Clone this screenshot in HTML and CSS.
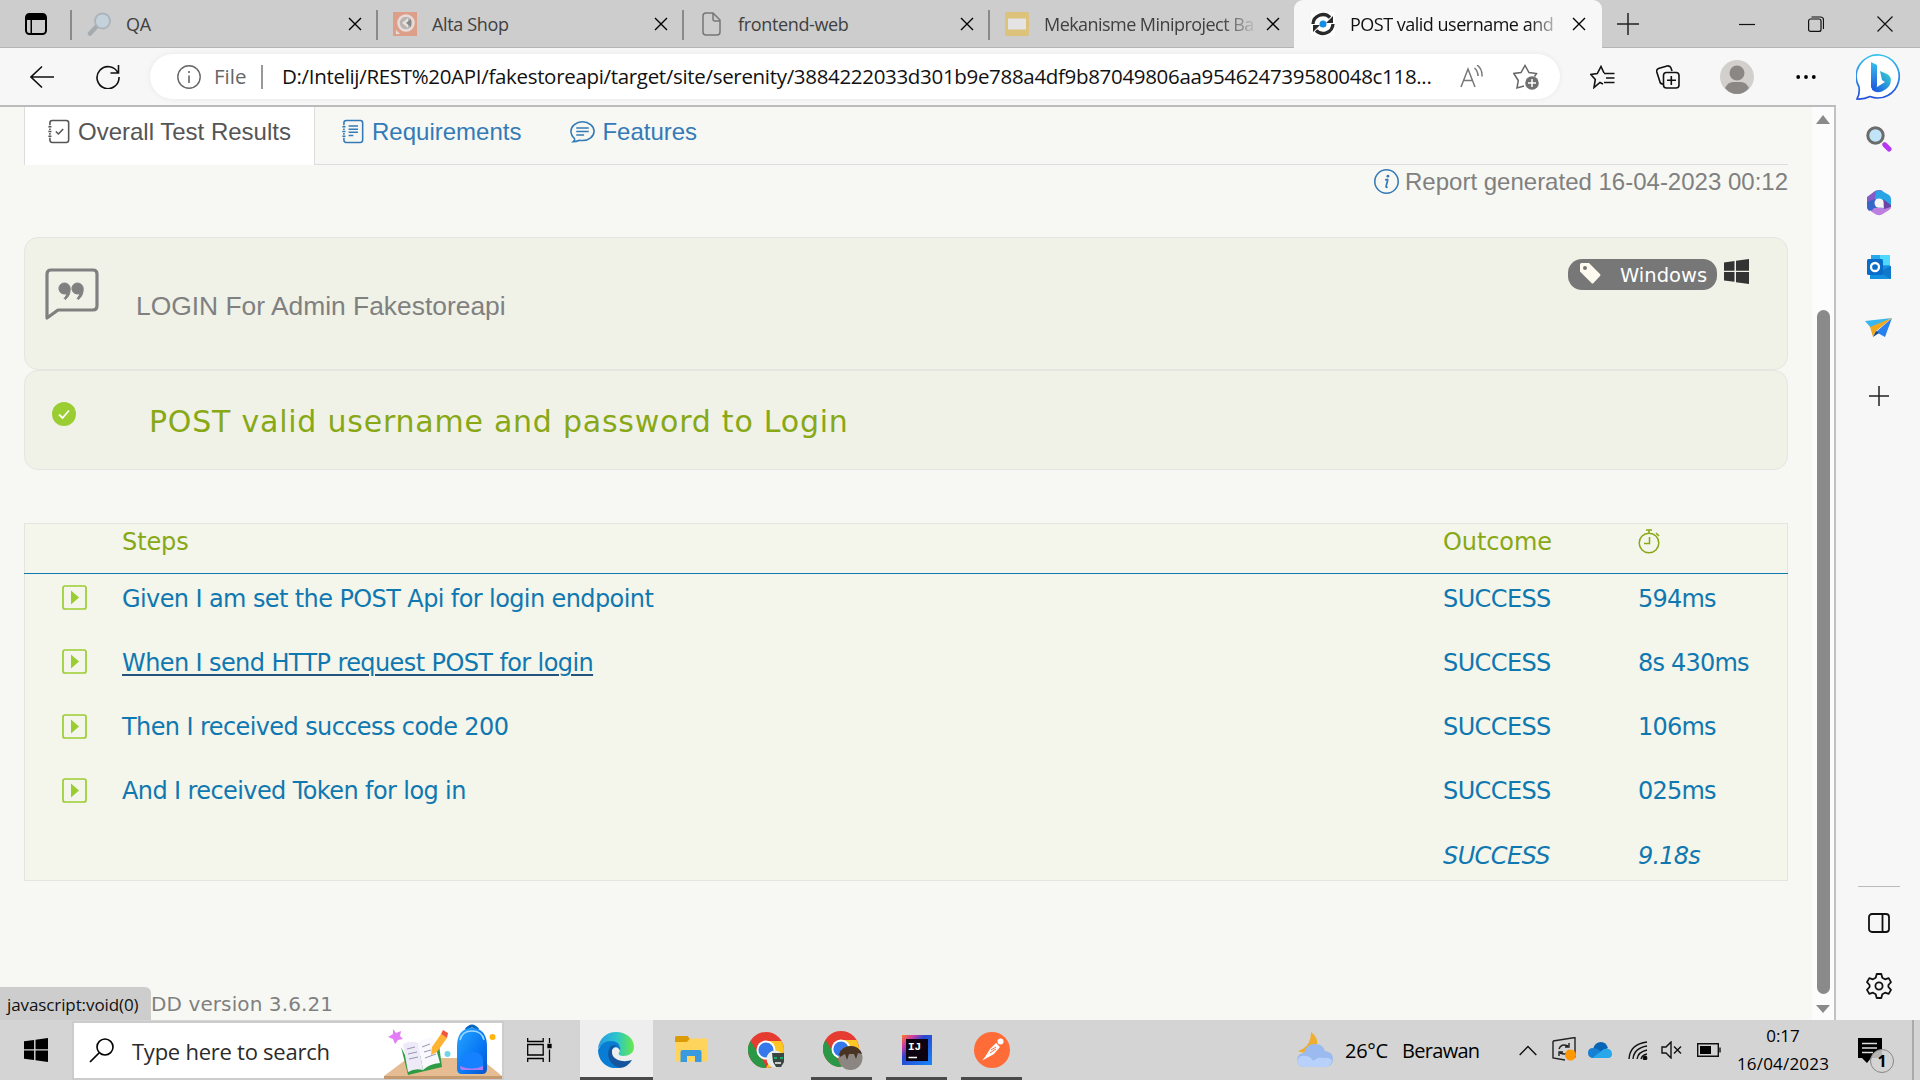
FILE: index.html
```html
<!DOCTYPE html>
<html lang="en">
<head>
<meta charset="utf-8">
<title>POST valid username and password to Login</title>
<link rel="stylesheet" href="styles.css">
</head>
<body>
<header class="tabstrip">
  <div class="tab-actions"><svg width="24" height="24" viewBox="0 0 24 24"><rect x="2" y="2" width="20" height="20" rx="3.5" fill="none" stroke="#000" stroke-width="2"/><path d="M2 8V5q0-3 3-3h14q3 0 3 3v3zM6.500 8h1.500v14h-1.500z"/></svg></div>
  <div class="tab"><svg class="fav" viewBox="0 0 24 24"><path d="M10 14L3 21.500" stroke="#a5abae" stroke-width="4.500" stroke-linecap="round"/><circle cx="15.500" cy="9" r="7.500" fill="#c4d2dc" stroke="#abb4ba" stroke-width="1.800"/></svg><span class="tab-title">QA</span><svg class="close" viewBox="0 0 14 14"><path d="M1 1l12 12M13 1L1 13"/></svg></div>
  <div class="tab"><svg class="fav" viewBox="0 0 24 24"><path fill="#dd9f8a" d="M0 0h24v24H0z"/><circle cx="13" cy="11" r="7.500" fill="#b9b4b2" stroke="#e6ddda" stroke-width="2.500"/><path d="M3 18l4 4H3zM9 11l6-5v10z" fill="#e6e0de"/><path d="M13 11l5-4v8z" fill="#888"/></svg><span class="tab-title">Alta Shop</span><svg class="close" viewBox="0 0 14 14"><path d="M1 1l12 12M13 1L1 13"/></svg></div>
  <div class="tab"><svg class="fav" viewBox="0 0 24 24"><path d="M6 1h8l7 7v12q0 3-3 3H7q-3 0-3-3V4q0-3 3-3M14 1v6q0 2 2 2h5" fill="none" stroke="#777" stroke-width="1.500"/></svg><span class="tab-title">frontend-web</span><svg class="close" viewBox="0 0 14 14"><path d="M1 1l12 12M13 1L1 13"/></svg></div>
  <div class="tab"><svg class="fav" viewBox="0 0 24 24"><rect width="24" height="24" rx="2" fill="#ddc27c"/><path d="M3 6.500h18v11H3z" fill="#e4e4e4"/></svg><span class="tab-title fade slides">Mekanisme Miniproject Ba</span><svg class="close" viewBox="0 0 14 14"><path d="M1 1l12 12M13 1L1 13"/></svg></div>
  <div class="tab active"><svg class="fav" viewBox="0 0 24 24"><path fill="#fff" d="M0 0h24v24H0z"/><g fill="none" stroke="#292929" stroke-width="3.300"><path d="M2 12A10 10 0 0 1 19 5.500M22 12A10 10 0 0 1 5 18.500"/></g><path d="M22 4v7h-7zM2 20v-7h7z" fill="#292929"/><circle cx="12" cy="12" r="3.500" fill="#168de2"/></svg><span class="tab-title fade">POST valid username and</span><svg class="close" viewBox="0 0 14 14"><path d="M1 1l12 12M13 1L1 13"/></svg></div>
  <svg class="new-tab" width="22" height="22" viewBox="0 0 22 22"><path d="M11 0v22M0 11h22"/></svg>
  <div class="win-buttons">
    <svg width="16" height="16" viewBox="0 0 16 16"><path d="M0 8.500h16"/></svg>
    <svg width="16" height="16" viewBox="0 0 16 16"><rect x=".6" y="3" width="12.400" height="12.400" rx="2"/><path d="M3.500 1h9q3 0 3 3v9"/></svg>
    <svg width="16" height="16" viewBox="0 0 16 16"><path d="M.5.5l15 15M15.500.5l-15 15"/></svg>
  </div>
</header>

<nav class="toolbar">
  <svg class="back" width="24" height="24" viewBox="0 0 24 24"><path d="M24 12H1M12 1.500L1 12l11 10.500"/></svg>
  <svg class="reload" width="24" height="24" viewBox="0 0 24 24"><path d="M22 8A11 11 0 1 0 23 12M22.500 0v8h-8"/></svg>
  <div class="address">
    <svg width="24" height="24" viewBox="0 0 24 24"><circle cx="12" cy="12" r="11.200" fill="none" stroke="#666" stroke-width="1.400"/><path d="M12 10.500v7.500" stroke="#666" stroke-width="1.600"/><circle cx="12" cy="7" r="1.100" fill="#666"/></svg>
    <span class="scheme">File</span><i class="pipe"></i>
    <span class="url">D:/Intelij/REST%20API/fakestoreapi/target/site/serenity/3884222033d301b9e788a4df9b87049806aa954624739580048c118...</span>
    <svg class="read" width="24" height="24" viewBox="0 0 24 24"><path d="M1 22L8 4l7 18M3.500 15.500h9M14.500 3q3.500 3 3.500 8M17 0q5.500 4 5 11.500" fill="none" stroke="#777" stroke-width="1.500"/></svg>
    <svg width="26" height="26" viewBox="0 0 26 26"><path d="M11 22l-7 2 1.300-7.500L.8 9.500l7.200-1L12 1.500l4 7 7.500 1-2 3" fill="none" stroke="#666" stroke-width="1.500"/><circle cx="19" cy="19" r="6.800" fill="#707070"/><path d="M19 15v8M15 19h8" stroke="#fff" stroke-width="1.500"/></svg>
  </div>
  <svg class="fav-list" width="26" height="24" viewBox="0 0 26 24"><path d="M14 8.500h10.500M16 13h8.500M14 17.500h10.500M13 19l-3-1.500-6 5 1.300-8L.8 9.500l6.500-1L11 1.500l3 6.500"/></svg>
  <svg class="collections" width="24" height="24" viewBox="0 0 24 24"><path d="M7 19Q4.500 19 4 17L.8 7Q.2 4.500 2.500 3.500L11 1q3-.7 4 2l1 3"/><rect x="7.500" y="7.500" width="15.500" height="15.500" rx="3"/><path d="M15.300 11v9M11 15.300h9"/></svg>
  <svg class="avatar" width="34" height="34" viewBox="0 0 34 34"><circle cx="17" cy="17" r="17" fill="#d2d0cd"/><circle cx="17" cy="13" r="7.500" fill="#8a8785"/><path d="M5 28q3-6 8-6h8q5 0 8 6-5 6-12 6T5 28z" fill="#8a8785"/></svg>
  <svg class="dots" width="20" height="6" viewBox="0 0 20 6"><circle cx="2.200" cy="3" r="1.900"/><circle cx="10" cy="3" r="1.900"/><circle cx="17.800" cy="3" r="1.900"/></svg>
  <svg class="bing" width="46" height="48" viewBox="0 0 46 48"><defs><linearGradient id="bg1" x1="0" y1="0" x2="0" y2="1"><stop stop-color="#35c1ee"/><stop offset="1" stop-color="#2350db"/></linearGradient><linearGradient id="bg2" x1="0" y1="1" x2="1" y2="0"><stop stop-color="#174ae4"/><stop offset="1" stop-color="#37d8d0"/></linearGradient></defs><path d="M23.500 1A21.500 21.500 0 1 1 14 42.500Q8 45.500 1 45q3-5 2-12A21.500 21.500 0 0 1 23.500 1z" fill="#fff" stroke="url(#bg1)" stroke-width="1.700"/><path d="M15 8l6 3v21l-2 5-4-4z" fill="url(#bg1)"/><path d="M24 17l7 3q5 2.500 3.500 9-1 4-6 7-5 3.500-10 1.500-3-1.500-3.500-5l6 .5 8-5-3-2z" fill="url(#bg2)"/></svg>
</nav>

<div class="middle">
  <main class="page">
    <div class="report-tabs">
      <div class="rtab current"><svg width="25" height="25" viewBox="0 0 16 16"><path d="M4 1h9q1.500 0 1.500 1.500v11Q14.500 15 13 15H4q-1.500 0-1.500-1.500V12m0-2V9m0-2V6m0-2V2.500Q2.500 1 4 1M1.500 5h2M1.500 8h2M1.500 11h2M6.300 8l1.700 1.600 3-3.200" /></svg><span>Overall Test Results</span></div>
      <div class="rtab second"><svg width="25" height="25" viewBox="0 0 16 16"><path d="M4 1h9q1.500 0 1.500 1.500v11Q14.500 15 13 15H4q-1.500 0-1.500-1.500V12m0-2V9m0-2V6m0-2V2.500Q2.500 1 4 1M1.500 5h2M1.500 8h2M1.500 11h2M5.500 4.500h6M5.500 6.500h6M5.500 8.500h6M5.500 10.500h3" /></svg><span>Requirements</span></div>
      <div class="rtab third"><svg width="25" height="25" viewBox="0 0 16 16"><path d="M3 12.500Q.6 10.500.6 7.800C.6 4.500 4 1.800 8 1.800s7.400 2.700 7.400 6-3.400 6-7.400 6q-1 0-2-.2-2 1-4 1 1.200-1 1-2.100M4 5.800h8M4 8h8M4 10.200h5"/></svg><span>Features</span></div>
    </div>
    <div class="generated"><svg width="25" height="25" viewBox="0 0 16 16"><circle cx="8" cy="8" r="7.500" fill="none" stroke="#337ab7"/><path d="M8.900 6.600L7.700 11.200q0 .8 1 .3M7.100 6.900l1.800-.3" fill="none" stroke="#337ab7" stroke-width="1.100"/><circle cx="8.900" cy="4.600" r=".9" fill="#337ab7"/></svg><span>Report generated 16-04-2023 00:12</span></div>

    <section class="card story">
      <svg width="54" height="54" viewBox="0 0 54 54"><path d="M2 50V6q0-4 4-4h42q4 0 4 4v32q0 4-4 4H13z" fill="none" stroke="#808080" stroke-width="3.200" stroke-linejoin="round"/><path d="M19.500 15a5.700 5.700 0 0 1 5.700 6q0 7-5 10.500l-1-1q2.500-3 2.500-5a5.500 5.500 0 1 1-2.200-10.500zM32.500 15a5.700 5.700 0 0 1 5.700 6q0 7-5 10.500l-1-1q2.500-3 2.500-5A5.500 5.500 0 1 1 32.500 15z" fill="#808080" stroke="#808080"/></svg>
      <h2>LOGIN For Admin Fakestoreapi</h2>
      <div class="tagline">
        <span class="badge"><svg width="21" height="21" viewBox="0 0 21 21"><path d="M0 1.500Q0 0 1.500 0H9l11 11q1 1 0 2l-6.500 7q-1 1-2 0L0 8.500z" fill="#fffaf0"/><circle cx="5" cy="5" r="2" fill="#777"/></svg><b>Windows</b></span>
        <svg width="25" height="25" viewBox="0 0 25 25"><path d="M0 3.500L10.500 2v9.700H0zM12 1.800L25 0v11.700H12zM0 13h10.500v9.800L0 21.500zM12 13h13v12l-13-1.800z" fill="#333"/></svg>
      </div>
    </section>
    <section class="card scenario">
      <svg width="24" height="24" viewBox="0 0 24 24"><circle cx="12" cy="12" r="12" fill="#9acd32"/><path d="M7 12.500l3.500 3.500L17 8.500" fill="none" stroke="#fff" stroke-width="1.800"/></svg>
      <h1>POST valid username and password to Login</h1>
    </section>

    <section class="steps">
      <div class="row head"><i></i><span>Steps</span><span>Outcome</span><svg width="22" height="25" viewBox="0 0 22 25"><circle cx="11" cy="14" r="9.800"/><path d="M8 1h6M11 1v3M18 4l3 3M11.500 8v6.500H6"/></svg></div>
      <div class="row"><svg class="play" viewBox="0 0 25 25"><rect x="1" y="1" width="23" height="23" rx="2"/><path d="M9 5.500l8 7-8 7z"/></svg><a>Given I am set the POST Api for login endpoint</a><span>SUCCESS</span><span class="time-taken">594ms</span></div>
      <div class="row"><svg class="play" viewBox="0 0 25 25"><rect x="1" y="1" width="23" height="23" rx="2"/><path d="M9 5.500l8 7-8 7z"/></svg><a class="hovered">When I send HTTP request POST for login</a><span>SUCCESS</span><span class="time-taken">8s 430ms</span></div>
      <div class="row"><svg class="play" viewBox="0 0 25 25"><rect x="1" y="1" width="23" height="23" rx="2"/><path d="M9 5.500l8 7-8 7z"/></svg><a>Then I received success code 200</a><span>SUCCESS</span><span class="time-taken">106ms</span></div>
      <div class="row"><svg class="play" viewBox="0 0 25 25"><rect x="1" y="1" width="23" height="23" rx="2"/><path d="M9 5.500l8 7-8 7z"/></svg><a>And I received Token for log in</a><span>SUCCESS</span><span class="time-taken">025ms</span></div>
      <div class="row total"><i></i><i></i><em>SUCCESS</em><em class="time-taken">9.18s</em></div>
    </section>
    <footer class="footer"><div class="status">javascript:void(0)</div><span>DD version 3.6.21</span></footer>
  </main>
  <div class="scrollbar"><i class="up"></i><i class="thumb"></i><i class="down"></i></div>
  <aside class="sidebar">
    <svg width="26" height="26" viewBox="0 0 26 26"><path d="M17 17l2 2" stroke="#777" stroke-width="3"/><path d="M19 19l4 4" stroke="#b936f5" stroke-width="5" stroke-linecap="round"/><circle cx="9.500" cy="9.500" r="7.700" fill="#c2e4f8" stroke="#6b6b6b" stroke-width="3"/></svg>
    <svg width="26" height="26" viewBox="0 0 26 26"><path d="M1 7l8-6q4-2 8 0l-7 7v10l-7 3q-2-2-2-4z" fill="#855bc7"/><path d="M10 1q3-1.500 6 0l7 4q2 1.500 2 4v8l-7-7-9-1z" fill="#29a5e6"/><path d="M1 12l8-3v8l9 1-6 5-9-3q-2-1-2-4z" fill="#3566c9"/><path d="M8 18h10l7-2q0 3-2 4l-7 4.500q-3 1.500-6 0l-5-3z" fill="#bc80e0"/><path d="M17 9l8 6v2l-7 2z" fill="#6b45a5"/><circle cx="13" cy="13" r="4.500" fill="#f6f6f6"/></svg>
    <svg width="26" height="26" viewBox="0 0 26 26"><path d="M5 1h19v12H5z" fill="#28a8ea"/><path d="M14 1h10v10H14z" fill="#50d9ff"/><path d="M4 12h21v13H4z" fill="#1490df"/><path d="M25 12v13l-12-7z" fill="#0f78c8"/><rect x="1" y="5" width="16" height="16" rx="1.500" fill="#0a6cc9"/><circle cx="9" cy="13" r="4" fill="none" stroke="#fff" stroke-width="2.300"/></svg>
    <svg width="28" height="20" viewBox="0 0 28 20"><path d="M0 3L27 0 6 10z" fill="#38b6ee"/><path d="M27 0L20 19l-9-5z" fill="#2881ed"/><path d="M5 9L27 0 11 13l-3 6z" fill="#f2a81d"/><path d="M8 19l3-6 3 2z" fill="#17478c"/></svg>
    <svg class="plus" width="20" height="20" viewBox="0 0 20 20"><path d="M10 0v20M0 10h20"/></svg>
    <hr>
    <svg class="panel" width="22" height="20" viewBox="0 0 22 20"><rect x="1" y="1" width="20" height="18" rx="3"/><path d="M14.500 1v18"/></svg>
    <svg class="gear" width="26" height="26" viewBox="0 0 26 26"><path d="M10.700 1h4.600l1 3.800 2.700 1.500 3.700-1.200 2.300 4-2.600 2.900v2l2.600 2.900-2.300 4-3.700-1.200-2.700 1.500-1 3.800h-4.600l-1-3.800L7 19.700l-3.700 1.200-2.300-4L3.600 14v-2L1 9.100l2.300-4L7 6.300l2.700-1.500z"/><circle cx="13" cy="13" r="3.600"/></svg>
  </aside>
</div>

<footer class="taskbar">
  <svg class="start" width="24" height="24" viewBox="0 0 25 25"><path d="M0 3.500L10.500 2v9.700H0zM12 1.800L25 0v11.700H12zM0 13h10.500v9.800L0 21.500zM12 13h13v12l-13-1.800z"/></svg>
  <div class="search">
    <svg width="25" height="25" viewBox="0 0 25 25"><circle cx="16" cy="9" r="8" fill="none" stroke="#000" stroke-width="1.600"/><path d="M10 15L1 24" stroke="#000" stroke-width="1.700"/></svg>
    <span>Type here to search</span>
    <svg class="art" width="118" height="56" viewBox="0 0 118 56"><defs><linearGradient id="bag" x1="0" y1="0" x2="1" y2="1"><stop stop-color="#27a7ff"/><stop offset=".6" stop-color="#0877f5"/><stop offset="1" stop-color="#0755c8"/></linearGradient></defs><path d="M24 35h72l22 18H0z" fill="#e6bd92"/><path d="M0 53h118v3H0z" fill="#c39a70"/><path d="M9 6l3 4 5-2-1 5 3 3-5 1-3 4-2-5-5-2 5-3z" fill="#e37df7"/><path d="M17 24l7 28 34-8-3-22-6 8-26 6z" fill="#2f9b45"/><path d="M19 21q9-4 15-1l5 27q-8-2-15 2z" fill="#eeeaf7"/><path d="M34 20q5-5 15-5l7 25q-11 1-17 7z" fill="#faf8ff"/><path d="M23 26l8-2M24 31l9-2M25 36l9-2M38 24l8-3M40 29l7-2M41 35l11-4" stroke="#9994b2"/><path d="M48 24L57 11l6 4-10 14-6 3z" fill="#ffb333"/><path d="M57 11l2-4 5 3-1 5z" fill="#f0573b"/><circle cx="63.500" cy="31" r="3" fill="#70d4e8"/><circle cx="108.500" cy="14" r="3" fill="#ffb50b"/><path d="M82 7q6-8 12 0" fill="none" stroke="#0867bd" stroke-width="3"/><path d="M73 24Q73 5 88 5t15 19v22q0 5-5 5H78q-5 0-5-5z" fill="url(#bag)"/><path d="M76 17q2-9 12-9t12 9" fill="none" stroke="#9fd8ff" stroke-width="1.500"/><path d="M77 45V38q0-9 11-9t11 9v7q0 2-2 2H79q-2 0-2-2z" fill="#1681ff"/><path d="M76 43q12 5 23 0v4H78q-2 0-2-4z" fill="#ab7bf2"/></svg>
  </div>
  <svg class="taskview" width="25" height="24" viewBox="0 0 25 24"><path d="M.7 0v3.500h15.500V0M.7 6.500h15.500V17H.7zM.7 24v-3.500h15.500V24M22.500 0v5M22.500 11.500V24"/><path d="M21 6.500h3v3h-3z" fill="#000"/></svg>
  <div class="app edge on"><svg width="36" height="36" viewBox="0 0 36 36"><defs><linearGradient id="e1"><stop stop-color="#279be3"/><stop offset=".5" stop-color="#2bc3cf"/><stop offset="1" stop-color="#66eb48"/></linearGradient></defs><path d="M0 17C1 6 9 0 18 0c11 0 18 7 18 15 0 6-5 9-11 9-5 0-5-3-3-5 1-6-3-9-8-9Q5 10 0 17z" fill="url(#e1)"/><path d="M0 18Q4 9 13 9c8 0 10 6 9 10-3-7-9-3-9 3 0 7 4 12 9 14C9 38 0 29 0 18z" fill="#087dd3"/><path d="M13 14c-5 6-4 18 9 22q8-1 12-8c-9 3-21 0-20-9 0-3 3-6 7-4q-4-3-8-1z" fill="#15559d"/></svg></div>
  <div class="app files"><svg width="32" height="28" viewBox="0 0 32 28"><path d="M0 1.500Q0 0 1.500 0h11l3 3.500V10H0z" fill="#dc9b06"/><path d="M0 6h12l3-3.500h17V24q0 1.500-1.500 1.500h-29Q0 25.500 0 24z" fill="#ffd45c"/><path d="M5.500 26V16q0-2 2-2h17q2 0 2 2v10H20v-6h-8v6z" fill="#3a9ae0"/></svg></div>
  <div class="app chrome1"><svg width="36" height="36" viewBox="0 0 36 36"><circle cx="18" cy="18" r="18" fill="#e53b30"/><path d="M2.500 9L14 27l5 9A18 18 0 0 1 2.500 9z" fill="#2b9847"/><path d="M18 9h15.500A18 18 0 0 1 18 36l8-14z" fill="#fdc625"/><circle cx="18" cy="18" r="9.500" fill="#fff"/><circle cx="18" cy="18" r="7.600" fill="#3478ec"/><circle cx="27" cy="27" r="8.500" fill="#e7eded"/><path d="M24 21h12v9l-3 5h-5l-3-5z" fill="#3b4644"/><path d="M27 30h6v2h-6z" fill="#ccc"/><path d="M26 25h3v2h-3zM32 25h3v2h-3z" fill="#0caf65"/></svg></div>
  <div class="app chrome2 run"><svg width="40" height="40" viewBox="0 0 40 40"><circle cx="18" cy="18" r="18" fill="#e53b30"/><path d="M2.500 9L14 27l5 9A18 18 0 0 1 2.500 9z" fill="#2b9847"/><path d="M18 9h15.500A18 18 0 0 1 18 36l8-14z" fill="#fdc625"/><circle cx="18" cy="18" r="9.500" fill="#fff"/><circle cx="18" cy="18" r="7.600" fill="#3478ec"/><circle cx="27.500" cy="27" r="12" fill="#8b8681"/><path d="M16 23q3-8 12-8 8 0 11 8l-4-1-2 6-2-5h-5l-2 6-2-6-5 3z" fill="#493323"/></svg></div>
  <div class="app idea run"><svg width="30" height="30" viewBox="0 0 30 30"><defs><linearGradient id="ij" x1="0" y1="0" x2="1" y2="1"><stop stop-color="#ff7a22"/><stop offset=".2" stop-color="#d23ba3"/><stop offset=".4" stop-color="#2747cf"/><stop offset="1" stop-color="#1688fb"/></linearGradient></defs><path fill="url(#ij)" d="M0 0h30v30H0z"/><path fill="#0c0210" d="M4 4h22v22H4z"/><path d="M6.500 22.500h8.500" stroke="#fff" stroke-width="1.500"/><text x="6" y="15" class="ij">IJ</text></svg></div>
  <div class="app postman run"><svg width="36" height="36" viewBox="0 0 36 36"><circle cx="18" cy="18" r="18" fill="#ff6c37"/><circle cx="26.500" cy="9.500" r="3" fill="#fff"/><path d="M22 11l4 4-6 7-9 5-3 1.500 3-3.500 5-8z" fill="#fff"/><path d="M17 18l5-3M16 21l6-4" stroke="#ff6c37"/></svg></div>
  <svg class="weather" width="36" height="36" viewBox="0 0 36 36"><path d="M14 0q10 8 4 17-7 7-17 2 13-4 13-19z" fill="#f0ae31"/><path d="M7 35q-7-1-7-7t7-7q2-9 11-9 8 0 10 7 8 1 8 8t-8 8z" fill="#9abaf0"/><path d="M7 35q-7-1-7-6 2-6 8-5 6 0 8 5 5-5 10-3 6-1 9 2-1 7-7 7z" fill="#b8d1fa"/></svg>
  <span class="temp">26°C</span><span class="cond">Berawan</span>
  <svg class="chevron" width="18" height="11" viewBox="0 0 18 11"><path d="M.7 10L9 1.500l8.300 8.500"/></svg>
  <svg class="sync" width="25" height="26" viewBox="0 0 25 26"><path d="M1 4l22-3.500v20M1 4v17l12 2M7 12q2-6 9-3M17 6v4h-4M17 13q-2 6-9 3M7 19v-4h4" fill="none" stroke="#222" stroke-width="1.400"/><circle cx="18.500" cy="18" r="5.500" fill="#ff9800"/></svg>
  <svg class="cloud" width="24" height="16" viewBox="0 0 24 16"><path d="M5 7q2-7 8-7 5 0 7 6l-7 4z" fill="#0864b4"/><path d="M4 16q-4-1-4-5 0-5 5-5 3 0 6 2l9 8z" fill="#1680d3"/><path d="M5 15.500L16 7q8-1 8 5 0 4-4 4H5z" fill="#29a7eb"/></svg>
  <svg class="wifi" width="20" height="19" viewBox="0 0 20 19"><path d="M1 18Q2 3 19 1M5 18Q6 7 19 5M9 18q1-7 10-9M13 18q1-4 6-5"/><circle cx="17" cy="17" r="1.700" fill="#000"/></svg>
  <svg class="speaker" width="22" height="18" viewBox="0 0 22 18"><path d="M1 6h4l5-5v16l-5-5H1zM13 5.500l7 7M20 5.500l-7 7"/></svg>
  <svg class="battery" width="24" height="14" viewBox="0 0 24 14"><path d="M.7.7h20.600v12.600H.7zM23 4.500v5"/><path d="M3 3h11v8H3z" fill="#000" stroke="none"/></svg>
  <div class="clock"><span>0:17</span><span class="date">16/04/2023</span></div>
  <div class="notify"><svg width="24" height="25" viewBox="0 0 24 25"><path d="M0 0h24v20H13l-4 5-5-5H0z"/><path d="M4 5.500h15M4 10h15M4 14.500h11" stroke="#ddd" stroke-width="1.300"/></svg><b>1</b></div>
  <i class="desktop"></i>
</footer>
</body>
</html>
```
FILE: styles.css
```css
* { box-sizing: border-box; }
body { margin: 0; width: 1920px; height: 1080px; overflow: hidden; display: flex; flex-direction: column; background: #f6f7f2; font-family: "Open Sans", "Noto Sans", sans-serif; }
svg { display: block; flex: none; }
span, h1, h2, a, em { white-space: nowrap; }

.tabstrip { flex: none; height: 48px; display: flex; background: #cdcdcd; border-bottom: 1px solid #b5b5b5; }
.tab-actions { width: 70px; padding: 12px 0 0 24px; }
.tab { position: relative; width: 306px; height: 48px; padding: 0 13px 0 17px; display: flex; align-items: center; color: #404040; font-size: 18px; letter-spacing: -.35px; }
.tab::before { content: ""; position: absolute; left: 0; top: 10px; width: 2px; height: 30px; background: #8a8a8a; }
.fav { width: 24px; height: 24px; margin-right: 15px; }
.tab-title { width: 212px; line-height: 30px; }
.close { width: 14px; height: 14px; margin-left: 10px; stroke: #000; stroke-width: 1.4; }
.active { width: 308px; background: #f7f7f7; border-radius: 9px 9px 0 0; color: #111; }
.active::before { display: none; }
.fade { -webkit-mask-image: linear-gradient(90deg, #000 84%, transparent 101%); mask-image: linear-gradient(90deg, #000 84%, transparent 101%); }
.slides { letter-spacing: -.55px; }
.active .tab-title { letter-spacing: -.5px; }
.new-tab { margin: 13px 0 0 15px; stroke: #222; stroke-width: 1.5; }
.win-buttons { display: flex; gap: 53px; margin: 16px 27px 0 auto; fill: none; stroke: #111; stroke-width: 1.2; }

.toolbar { flex: none; height: 57px; display: flex; align-items: center; background: #f7f7f7; }
.back, .reload, .fav-list, .collections { fill: none; stroke: #111; stroke-width: 1.6; }
.back { margin-left: 30px; }
.reload { margin-left: 42px; }
.address { width: 1410px; height: 45px; margin-left: 30px; padding-left: 27px; display: flex; align-items: center; border-radius: 23px; background: #fff; box-shadow: 0 0 5px #e6e6e6; font-size: 20.5px; }
.scheme { width: 42px; margin: 0 0 2px 13px; color: #666; }
.pipe { width: 2px; height: 24px; margin-left: 5px; background: #999; }
.url { width: 1150px; margin: 0 0 2px 19px; color: #111; letter-spacing: -.32px; }
.read { margin: 0 29px 0 28px; }
.fav-list { margin-left: 30px; }
.collections { margin-left: 40px; }
.avatar { margin-left: 40px; }
.dots { margin-left: 42px; }
.bing { margin: 3px 0 0 40px; }

.middle { flex: none; height: 915px; display: flex; background: #f7f7f7; }
.page { width: 1812px; padding: 0 24px; border-top: 2px solid #bbb; background: #f7f8f3; display: flex; flex-direction: column; font-family: "Liberation Sans", Arial, sans-serif; }
.report-tabs { height: 58px; display: flex; border-bottom: 1px solid #ddd; }
.rtab { display: flex; height: 50px; align-items: center; font-size: 24px; color: #337ab7; gap: 7px; }
.rtab svg { fill: none; stroke: currentColor; stroke-width: 1; margin-top: -1px; }
.current { width: 291px; height: 58px; padding: 0 0 8px 21px; background: #fff; border: solid #ddd; border-width: 0 1px; color: #555; }
.second { margin-left: 25px; }
.third { margin-left: 49px; }
.generated { height: 34px; display: flex; justify-content: flex-end; align-items: center; gap: 6px; font-size: 24px; color: #808080; }
.generated svg { margin-top: -2px; }
.card { border: 1px solid #e4e6df; border-radius: 14px; background: #f0f2e8; display: flex; width: 1764px; }
.story { height: 133px; margin-top: 38px; padding: 30px 38px 0 20px; }
.story h2 { margin: 23px 0 0 37px; line-height: 30px; font-size: 26.4px; font-weight: 400; color: #808080; }
.tagline { margin: -9px 0 0 auto; height: 32px; display: flex; gap: 7px; }
.badge { width: 149px; height: 31px; border-radius: 14px; background: #777; display: flex; padding: 4px 0 0 12px; gap: 19px; }
.badge b { font: 400 19.5px/25px "DejaVu Sans", Verdana, sans-serif; color: #fff; }
.scenario { height: 100px; padding: 31px 0 0 27px; }
.scenario h1 { margin: 0 0 0 73px; font: 400 30px/40px "DejaVu Sans", Verdana, sans-serif; letter-spacing: .77px; color: #88a816; }

.steps { width: 1764px; height: 358px; margin-top: 53px; border: 1px solid #e3e5df; background: #f4f5eb; font: 24px/32px "DejaVu Sans", Verdana, sans-serif; color: #1078b0; }
.row { display: grid; grid-template-columns: 60px 1321px 195px 1fr; height: 64.3px; padding: 8.5px 0 0 37px; align-items: start; letter-spacing: -.6px; }
.head { height: 50px; margin: 0 -1px; padding: 2px 0 0 38px; border-bottom: 1px solid #1078b0; color: #88a816; letter-spacing: -.1px; }
.head svg { fill: none; stroke: #88a816; stroke-width: 1.5; margin-top: 3px; }
.play { width: 25px; height: 25px; margin-top: 2.5px; fill: none; stroke: #9acd32; stroke-width: 1.7; }
.play path { fill: #9acd32; stroke: none; }
.row .time-taken { letter-spacing: -.8px; }
.hovered { justify-self: start; text-decoration: underline #23527c 2px; text-underline-offset: 3px; }
.footer { height: 33px; margin: auto 0 0 -24px; display: flex; font: 20px/34px "DejaVu Sans", Verdana, sans-serif; letter-spacing: .1px; color: #808080; }
.status { width: 151px; padding-left: 7px; background: #cdcdcd; border-radius: 0 6px 0 0; font: 17px/35px "Open Sans", sans-serif; color: #111; white-space: nowrap; letter-spacing: -.1px; }
.scrollbar { width: 24px; border-top: 2px solid #bbb; border-right: 2px solid #c2c2c2; background: #fcfcfc; display: flex; flex-direction: column; align-items: center; }
.up, .down { border: solid transparent; border-width: 0 7px; }
.up { margin-top: 8px; border-bottom: 9px solid #8a8a8a; }
.down { margin-top: 11px; border-top: 8px solid #8a8a8a; }
.thumb { width: 13px; height: 684px; margin-top: 186px; border-radius: 7px; background: #8a8a8a; }
.sidebar { width: 84px; display: flex; flex-direction: column; align-items: center; padding: 21px 0 0 1px; }
.sidebar svg { margin-bottom: 38px; }
.sidebar svg:nth-child(4) { margin-bottom: 48px; }
.sidebar .plus { margin: 0; stroke: #222; stroke-width: 1.5; }
.sidebar hr { width: 42px; height: 1px; margin: auto 0 26px; border: 0; background: #bbb; flex: none; }
.sidebar .panel, .sidebar .gear { fill: none; stroke: #111; stroke-width: 1.8; margin-bottom: 40px; }
.sidebar .gear { stroke-linejoin: round; margin-bottom: 21px; }

.taskbar { flex: none; height: 60px; display: flex; align-items: center; background: #d4d4d4; }
.start { margin-left: 24px; }
.search { width: 432px; height: 59px; margin-left: 24px; padding-left: 15px; display: flex; align-items: center; border: 2px solid #ccc; background: #fff; font-size: 22px; letter-spacing: -.25px; color: #2b2b2b; }
.search span { width: 255px; margin: 2px 0 0 18px; }
.art { margin: 0 0 -2px -1px; }
.taskview { margin-left: 23px; fill: none; stroke: #000; stroke-width: 1.3; }
.app { height: 60px; display: flex; align-items: center; justify-content: center; border-bottom: 3px solid transparent; padding-top: 3px; }
.edge { width: 73px; margin-left: 28px; }
.on { background: #eee; border-color: #4a4a4a; padding-right: 1px; }
.files { width: 32px; margin-left: 22px; }
.chrome1 { width: 36px; margin-left: 41px; }
.run { border-color: #4a4a4a; width: 61px; }
.chrome2 { margin-left: 27px; padding: 5px 0 0 3px; }
.idea, .postman { margin-left: 14px; }
.ij { font: bold 11px "Liberation Mono", monospace; fill: #fff; }
.weather { margin-left: 275px; }
.temp, .cond { font-size: 20px; letter-spacing: -.3px; margin-top: 1px; }
.temp { width: 57px; margin-left: 12px; }
.cond { width: 78px; letter-spacing: -.7px; }
.chevron { margin-left: 39px; }
.sync { margin-left: 15px; }
.cloud { margin-left: 11px; }
.wifi { margin-left: 16px; }
.speaker { margin-left: 13px; }
.battery { margin-left: 14px; }
.chevron, .wifi, .speaker, .battery { fill: none; stroke: #111; stroke-width: 1.4; }
.clock { width: 94px; margin-left: 15px; display: flex; flex-direction: column; align-items: center; font-size: 17px; line-height: 28px; }
.date { letter-spacing: .2px; }
.notify { position: relative; margin-left: 28px; }
.notify b { position: absolute; left: 12px; top: 11px; width: 24px; height: 24px; border: 1px solid #888; border-radius: 50%; background: rgba(212,212,212,.85); font-size: 16px; line-height: 23px; text-align: center; }
.desktop { width: 2px; height: 60px; margin: 0 6px 0 auto; background: #aaa; }
```
